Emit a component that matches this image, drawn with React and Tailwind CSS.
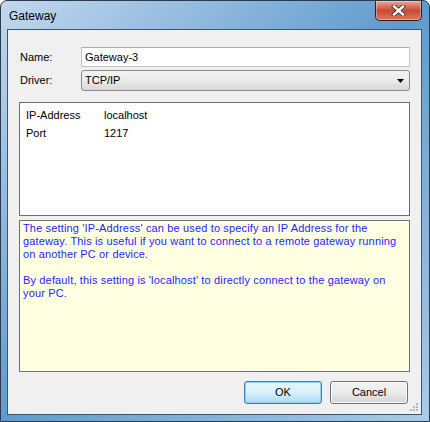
import React from 'react';

const font = { fontFamily: 'Tahoma, "Liberation Sans", "DejaVu Sans", sans-serif' };

function CloseButton() {
  return (
    <div className="absolute right-[7px] top-0 w-[47px] h-[20px] rounded-b-[5px] border border-t-0 border-[#3f1a14] bg-gradient-to-b from-[#e7a898] via-[#c94a33] to-[#d9775f] flex items-center justify-center shadow-[inset_0_0_0_1px_rgba(255,255,255,0.35)]">
      <svg width="15" height="11" viewBox="0 0 15 11">
        <path d="M3 1.5 L12 9.5 M12 1.5 L3 9.5" stroke="#3a3a3a" strokeWidth="4.2" strokeLinecap="square" />
        <path d="M3 1.5 L12 9.5 M12 1.5 L3 9.5" stroke="#ffffff" strokeWidth="2.4" strokeLinecap="square" />
      </svg>
    </div>
  );
}

export default function App() {
  return (
    <div className="w-[430px] h-[422px] bg-white text-[11px] text-black" style={font}>
      <div className="relative w-full h-full flex flex-col rounded-t-[7px] border border-[#2b3a4d] bg-gradient-to-br from-[#c2d8ee] via-[#5e9bcd] to-[#a9cbe8]">
        {/* title bar */}
        <div className="h-[28px] flex items-center pl-[8px] pt-[1px] text-[12px] text-black" style={{ fontFamily: '"Segoe UI", "Liberation Sans", sans-serif' }}>
          Gateway
        </div>
        <CloseButton />

        {/* client area */}
        <div className="flex-1 ml-[6px] mr-[7px] mb-[6px] border border-[#3d5570] bg-[#f0f0f0] flex flex-col pl-[12px] pr-[11px] pt-[17px] relative">
          <div className="flex items-center h-[20px]">
            <div className="w-[61px]">Name:</div>
            <div className="flex-1 h-[20px] border border-[#c3c3c3] border-t-[#abadb3] bg-white flex items-center pl-[3px]">
              Gateway-3
            </div>
          </div>
          <div className="flex items-center h-[21px] mt-[3px]">
            <div className="w-[61px]">Driver:</div>
            <div className="flex-1 h-[21px] rounded-[3px] border border-[#8a8a8a] bg-gradient-to-b from-[#f3f3f3] via-[#ebebeb] to-[#d8d8d8] flex items-center justify-between pl-[3px] pr-[5px]">
              <span>TCP/IP</span>
              <svg width="7" height="4" viewBox="0 0 7 4"><path d="M0 0 H7 L3.5 4 Z" fill="#000" /></svg>
            </div>
          </div>

          {/* property grid */}
          <div className="mt-[11px] -ml-[1px] h-[114px] border border-[#6e6e6e] bg-white pt-[3px] pl-[6px]">
            <div className="flex h-[18px] items-center">
              <div className="w-[78px]">IP-Address</div>
              <div>localhost</div>
            </div>
            <div className="flex h-[18px] items-center">
              <div className="w-[78px]">Port</div>
              <div>1217</div>
            </div>
          </div>

          {/* description */}
          <div className="mt-[4px] -ml-[1px] h-[152px] border border-[#6e6e6e] bg-[#ffffe1] text-[#1f1fff] pl-[3px] pt-[1px] leading-[13px] tracking-[0.15px]">
            <div className="whitespace-nowrap">The setting 'IP-Address' can be used to specify an IP Address for the</div>
            <div className="whitespace-nowrap">gateway. This is useful if you want to connect to a remote gateway running</div>
            <div className="whitespace-nowrap">on another PC or device.</div>
            <div className="h-[13px]" />
            <div className="whitespace-nowrap">By default, this setting is 'localhost' to directly connect to the gateway on</div>
            <div className="whitespace-nowrap">your PC.</div>
          </div>

          {/* buttons */}
          <div className="flex justify-end gap-[8px] mt-[9px] pr-[2px]">
            <button className="w-[78px] h-[23px] rounded-[3px] border border-[#3c7fb1] bg-gradient-to-b from-[#eaf6fd] via-[#d9f0fc] to-[#a7d9f5] shadow-[inset_0_0_0_1px_#8fd3f7]">
              OK
            </button>
            <button className="w-[78px] h-[23px] rounded-[3px] border border-[#707070] bg-gradient-to-b from-[#f2f2f2] via-[#ebebeb] to-[#d5d5d5] shadow-[inset_0_0_0_1px_#fcfcfc]">
              Cancel
            </button>
          </div>

          {/* size grip */}
          <svg className="absolute right-[2px] bottom-[2px]" width="10" height="10" viewBox="0 0 10 10">
            <g fill="#b8b8b8">
              <rect x="7" y="1" width="2" height="2" />
              <rect x="4" y="4" width="2" height="2" />
              <rect x="7" y="4" width="2" height="2" />
              <rect x="1" y="7" width="2" height="2" />
              <rect x="4" y="7" width="2" height="2" />
              <rect x="7" y="7" width="2" height="2" />
            </g>
          </svg>
        </div>
      </div>
    </div>
  );
}
